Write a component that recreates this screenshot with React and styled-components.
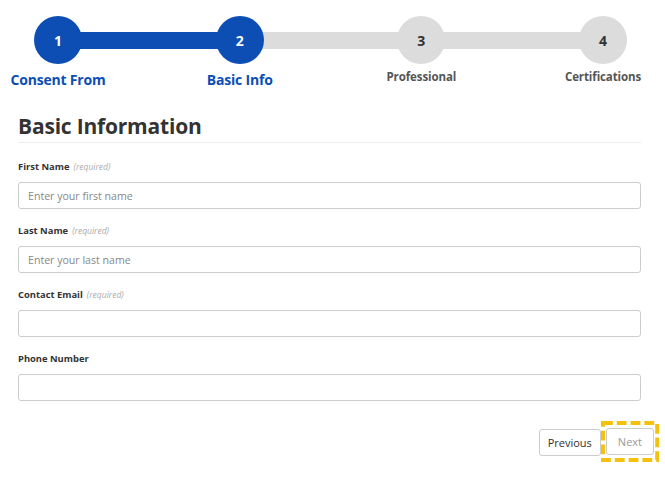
import React from "react";
import styled, { createGlobalStyle } from "styled-components";

const Global = createGlobalStyle`
  html, body { margin: 0; padding: 0; background: #fff; }
  body { font-family: "Open Sans", "Liberation Sans", sans-serif; color: #333; }
  * { box-sizing: border-box; }
`;

const Page = styled.div`
  width: 665px;
  height: 479px;
  padding: 16px 24px 0 18px;
`;

const Stepper = styled.div`
  display: flex;
  align-items: flex-start;
  padding: 0 14px 0 16px;
`;

const Step = styled.div`
  width: 48px;
  display: flex;
  flex-direction: column;
  align-items: center;
`;

const Circle = styled.div`
  width: 48px;
  height: 48px;
  border-radius: 50%;
  background: ${(p) => (p.$active ? "#0c4eb4" : "#dcdcdc")};
  color: ${(p) => (p.$active ? "#fff" : "#333")};
  font-weight: 700;
  font-size: 14px;
  display: flex;
  align-items: center;
  justify-content: center;
  position: relative;
  z-index: 1;
`;

const Connector = styled.div`
  flex: 1;
  height: 17px;
  margin: 16px -2px 0;
  background: ${(p) => (p.$active ? "#0c4eb4" : "#dcdcdc")};
`;

const StepLabel = styled.div`
  white-space: nowrap;
  font-weight: 700;
  margin-top: ${(p) => (p.$active ? "6px" : "5px")};
  font-size: ${(p) => (p.$active ? "14px" : "11.5px")};
  color: ${(p) => (p.$active ? "#0c4eb4" : "#555")};
  letter-spacing: ${(p) => (p.$active ? "-0.2px" : "-0.1px")};
`;

const Heading = styled.h2`
  margin: 23px 0 0;
  padding-bottom: 2px;
  font-size: 21px;
  font-weight: 700;
  color: #333;
  border-bottom: 1px solid #eee;
  letter-spacing: -0.2px;
`;

const Form = styled.div`
  display: flex;
  flex-direction: column;
  padding-top: 16px;
`;

const Field = styled.div`
  display: flex;
  flex-direction: column;
  margin-bottom: 14px;
`;

const Label = styled.div`
  font-size: 9.4px;
  font-weight: 700;
  color: #333;
  height: 21px;
  line-height: 16px;
  margin-bottom: 2px;
`;

const Req = styled.span`
  font-weight: 400;
  font-style: italic;
  color: #aaa;
  font-size: 8.5px;
  margin-left: 4px;
`;

const Input = styled.input`
  height: 27px;
  width: 100%;
  border: 1px solid #ccc;
  border-radius: 3px;
  padding: 0 9px;
  font-family: inherit;
  font-size: 10.6px;
  color: #333;
  outline: none;
  &::placeholder { color: #888; }
`;

const Footer = styled.div`
  display: flex;
  justify-content: flex-end;
  align-items: flex-start;
  gap: 5px;
  margin: 14px -13px 0 0;
`;

const Button = styled.button`
  height: 27px;
  padding: 0 ${(p) => (p.$narrow ? "11px" : "8px")};
  background: #fff;
  border: 1px solid #ccc;
  border-radius: 3px;
  font-family: inherit;
  font-size: 11px;
  color: ${(p) => (p.$disabled ? "#999" : "#333")};
  outline: none;
`;

const FocusRing = styled.span`
  position: relative;
  display: inline-flex;
  padding: 7px 5px 7px 5px;
  margin: -8px -5px -6px -5px;
`;

const RingSvg = styled.svg`
  position: absolute;
  inset: 0;
  width: 100%;
  height: 100%;
  overflow: visible;
  pointer-events: none;
`;

const steps = [
  { n: 1, label: "Consent From", active: true },
  { n: 2, label: "Basic Info", active: true },
  { n: 3, label: "Professional", active: false },
  { n: 4, label: "Certifications", active: false },
];

const fields = [
  { label: "First Name", req: true, ph: "Enter your first name" },
  { label: "Last Name", req: true, ph: "Enter your last name" },
  { label: "Contact Email", req: true, ph: "" },
  { label: "Phone Number", req: false, ph: "" },
];

export default function App() {
  return (
    <Page>
      <Global />
      <Stepper>
        {steps.map((s, i) => (
          <React.Fragment key={s.n}>
            {i > 0 && <Connector $active={s.active} />}
            <Step>
              <Circle $active={s.active}>{s.n}</Circle>
              <StepLabel $active={s.active}>{s.label}</StepLabel>
            </Step>
          </React.Fragment>
        ))}
      </Stepper>
      <Heading>Basic Information</Heading>
      <Form>
        {fields.map((f) => (
          <Field key={f.label}>
            <Label>
              {f.label}
              {f.req && <Req>(required)</Req>}
            </Label>
            <Input placeholder={f.ph} />
          </Field>
        ))}
      </Form>
      <Footer>
        <Button>Previous</Button>
        <FocusRing>
          <Button $disabled $narrow>Next</Button>
          <RingSvg viewBox="0 0 59 42" preserveAspectRatio="none">
            <rect x="2" y="2" width="55" height="38" fill="none" stroke="#f4c10f" strokeWidth="4" strokeDasharray="10 4" />
          </RingSvg>
        </FocusRing>
      </Footer>
    </Page>
  );
}
